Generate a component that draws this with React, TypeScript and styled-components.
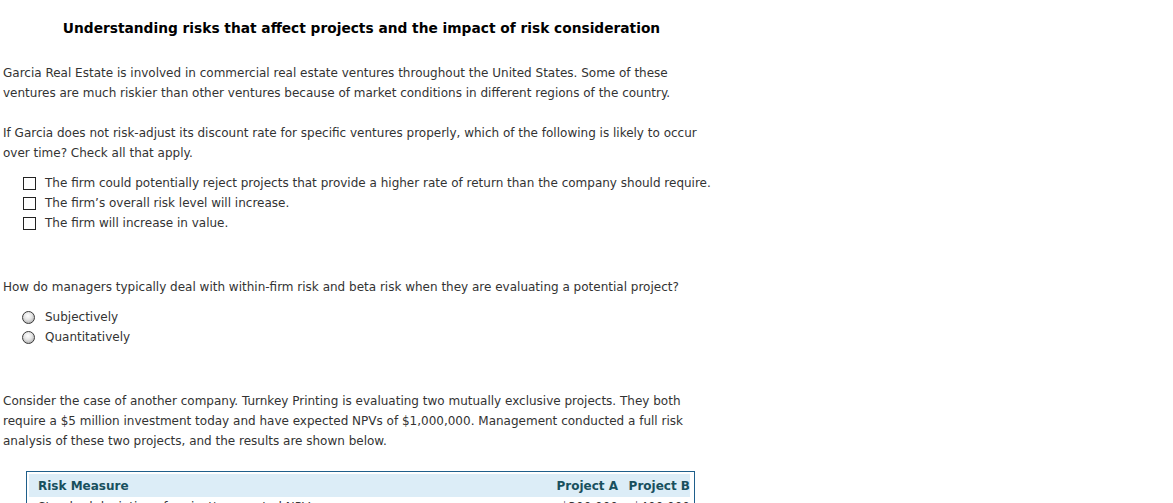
import React from "react";
import styled, { createGlobalStyle } from "styled-components";

const Global = createGlobalStyle`
  html, body { margin: 0; padding: 0; background: #ffffff; }
  body { font-family: Verdana, "DejaVu Sans", sans-serif; font-size: 12px; color: #333333; }
`;

const Page = styled.div`
  width: 720px;
  padding: 19px 0 0 3px;
  box-sizing: border-box;
`;

const Title = styled.h1`
  margin: 0 0 26px 0;
  font-size: 13.75px;
  line-height: 18px;
  font-weight: bold;
  color: #000000;
  text-align: center;
`;

const Para = styled.p`
  margin: 0 0 20px 0;
  line-height: 20px;
  color: #333333;
`;

const OptionList = styled.div<{ $gap: number }>`
  display: flex;
  flex-direction: column;
  padding-left: 20px;
  margin: -10px 0 ${(p) => p.$gap}px 0;
`;

const Option = styled.label`
  display: flex;
  align-items: center;
  height: 20px;
  line-height: 20px;
  color: #333333;
`;

const Box = styled.span`
  display: inline-block;
  width: 11px;
  height: 11px;
  border: 1px solid #222;
  background: #fff;
  margin: 0 9px 0 0;
  flex-shrink: 0;
`;

const Radio = styled.span`
  display: inline-block;
  width: 11px;
  height: 11px;
  border-radius: 50%;
  border: 1px solid #3a3a3a;
  background: radial-gradient(circle at 45% 35%, #ffffff 0%, #e6e6e6 40%, #9a9a9a 100%);
  margin: 0 10px 0 -1px;
  flex-shrink: 0;
`;

const Table = styled.div`
  margin: 13px 0 0 23px;
  width: 669px;
  border: 1px solid #1f5f8b;
  border-bottom: none;
  padding: 2px 4px 0 2px;
  box-sizing: border-box;
`;

const HeaderRow = styled.div`
  display: grid;
  grid-template-columns: 1fr 74px 72px;
  background: #dcedf7;
  height: 23px;
  align-items: center;
  font-weight: bold;
  color: #18505e;
  padding: 0 0 0 9px;
`;

const Cell = styled.div<{ $right?: boolean }>`
  text-align: ${(p) => (p.$right ? "right" : "left")};
  white-space: nowrap;
`;

const BodyRow = styled.div`
  display: grid;
  grid-template-columns: 1fr 74px 72px;
  height: 20px;
  align-items: center;
  color: #333;
  padding: 0 0 0 9px;
`;

export default function App() {
  return (
    <>
      <Global />
      <Page>
        <Title>Understanding risks that affect projects and the impact of risk consideration</Title>
        <Para>
          Garcia Real Estate is involved in commercial real estate ventures throughout the United States. Some of these
          ventures are much riskier than other ventures because of market conditions in different regions of the country.
        </Para>
        <Para>
          If Garcia does not risk-adjust its discount rate for specific ventures properly, which of the following is likely to occur
          over time? Check all that apply.
        </Para>
        <OptionList $gap={44}>
          <Option><Box />The firm could potentially reject projects that provide a higher rate of return than the company should require.</Option>
          <Option><Box />The firm’s overall risk level will increase.</Option>
          <Option><Box />The firm will increase in value.</Option>
        </OptionList>
        <Para>How do managers typically deal with within-firm risk and beta risk when they are evaluating a potential project?</Para>
        <OptionList $gap={44}>
          <Option><Radio />Subjectively</Option>
          <Option><Radio />Quantitatively</Option>
        </OptionList>
        <Para>
          Consider the case of another company. Turnkey Printing is evaluating two mutually exclusive projects. They both
          require a $5 million investment today and have expected NPVs of $1,000,000. Management conducted a full risk
          analysis of these two projects, and the results are shown below.
        </Para>
        <Table>
          <HeaderRow>
            <Cell>Risk Measure</Cell>
            <Cell $right>Project A</Cell>
            <Cell $right>Project B</Cell>
          </HeaderRow>
          <BodyRow>
            <Cell>Standard deviation of project's expected NPV</Cell>
            <Cell $right>$300,000</Cell>
            <Cell $right>$400,000</Cell>
          </BodyRow>
        </Table>
      </Page>
    </>
  );
}
